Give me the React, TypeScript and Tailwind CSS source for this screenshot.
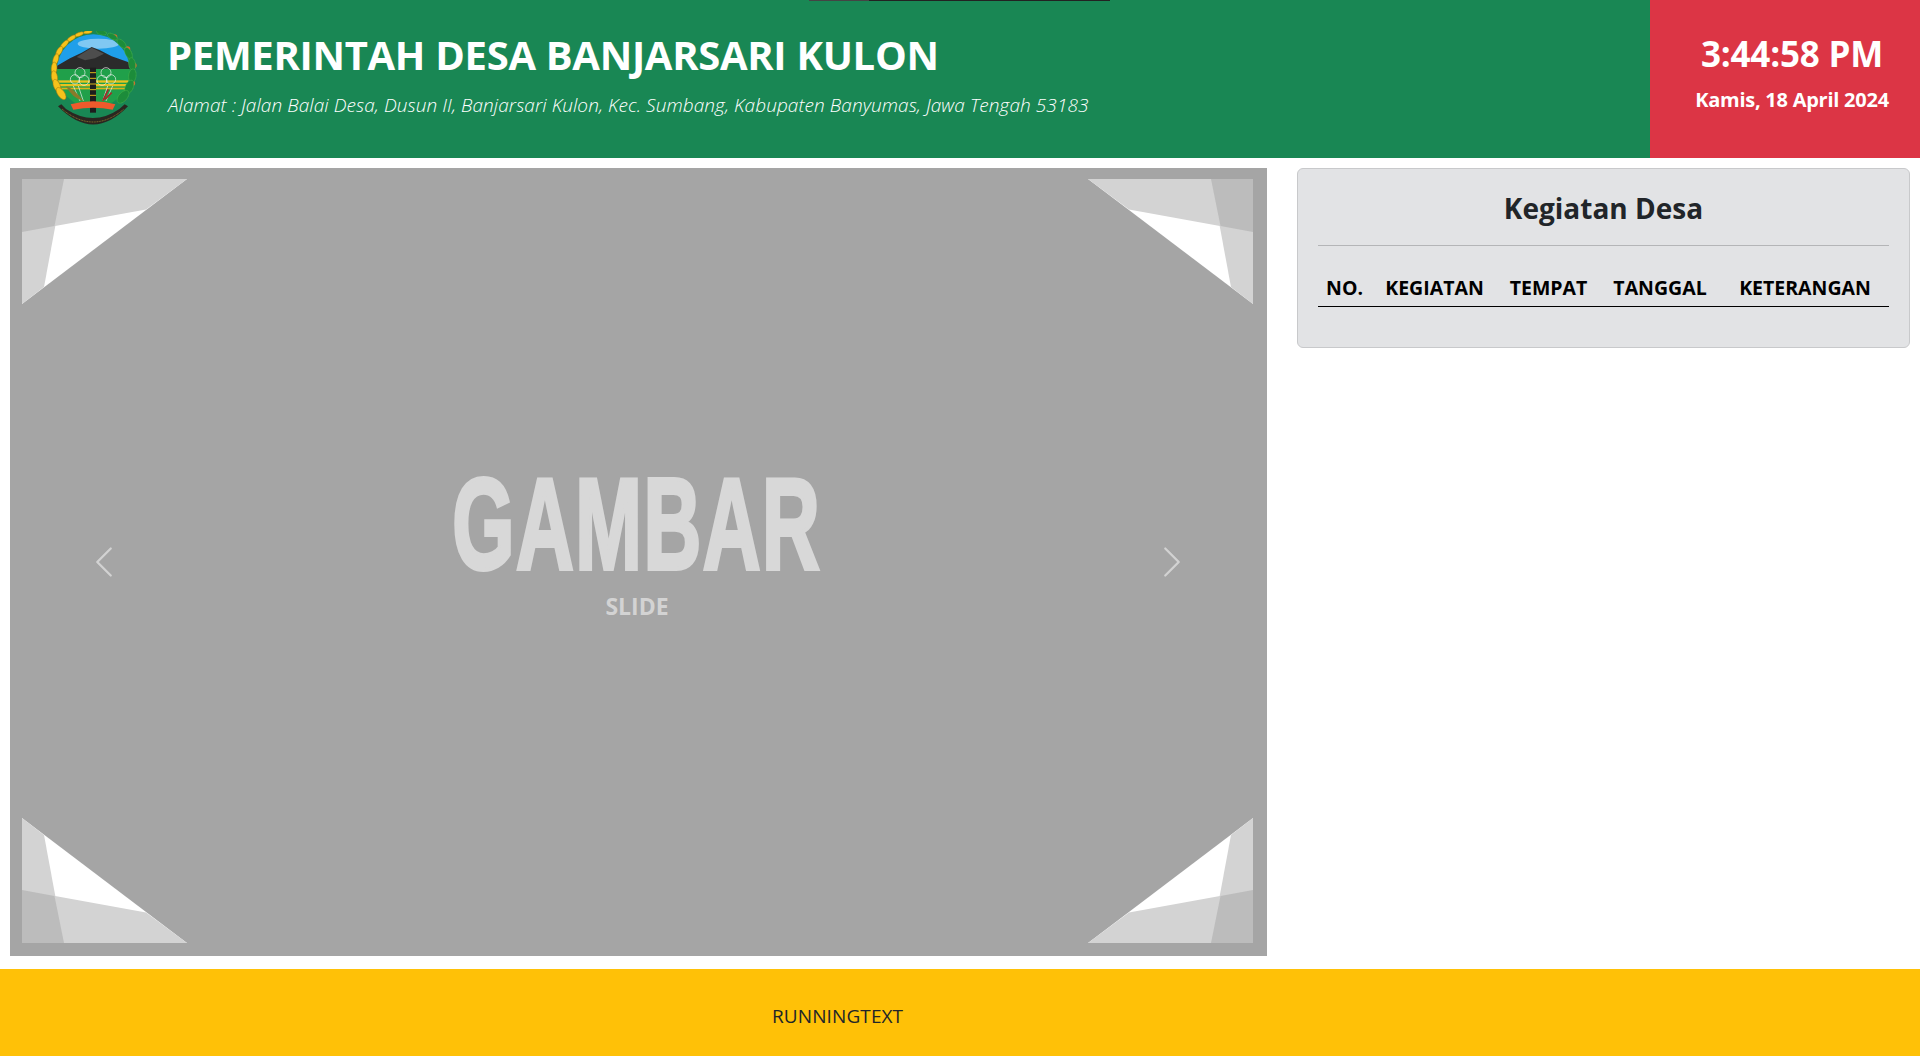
const sans = "font-['Open_Sans','Noto_Sans',sans-serif]";

const wreath = (from: number, count: number, step: number) =>
  Array.from({ length: count }, (_, i) => {
    const deg = from + i * step;
    const rad = (deg * Math.PI) / 180;
    return { x: 190 + 118 * Math.cos(rad), y: 150 + 118 * Math.sin(rad), r: deg, i };
  });

function Logo() {
  return (
    <svg viewBox="60 30 270 288" className="w-[90px] h-[96px] shrink-0">
      <defs>
        <clipPath id="badge">
          <circle cx="190" cy="150" r="110" />
        </clipPath>
      </defs>
      <g clipPath="url(#badge)">
        <rect x="60" y="30" width="270" height="110" fill="#1f9fea" />
        <ellipse cx="205" cy="68" rx="62" ry="15" fill="#cfeaf8" opacity="0.55" />
        <path d="M80 135 L120 112 L155 95 L185 78 L210 88 L245 106 L300 125 L300 146 L80 146 Z" fill="#2b2b2b" />
        <path d="M140 108 L185 80 L222 98 L195 112 L165 118 Z" fill="#4d4d4d" />
        <rect x="80" y="144" width="220" height="120" fill="#20a04a" />
        <rect x="80" y="178" width="220" height="7" fill="#e8c21e" />
        <rect x="80" y="189" width="220" height="7" fill="#e8c21e" />
        <rect x="80" y="200" width="220" height="5" fill="#d9b31a" />
      </g>
      <g fill="none" stroke="#f2f2f2" strokeWidth="2">
        <circle cx="150" cy="155" r="15" />
        <circle cx="135" cy="175" r="14" />
        <circle cx="162" cy="178" r="15" />
        <circle cx="228" cy="155" r="15" />
        <circle cx="243" cy="175" r="14" />
        <circle cx="216" cy="178" r="15" />
        <path d="M145 195 L160 240 M130 195 L150 240 M233 195 L218 240 M248 195 L228 240" />
      </g>
      <path d="M108 195 Q135 205 160 240 Q125 230 108 195 Z" fill="#8a7a2a" />
      <path d="M235 205 L218 240 M245 215 L225 235" stroke="#a52a2a" strokeWidth="5" fill="none" />
      <rect x="180" y="140" width="18" height="135" fill="#1e1e1e" />
      <path d="M180 155 H198 M180 172 H198 M180 189 H198 M180 206 H198 M180 223 H198" stroke="#d9b31a" strokeWidth="3" />
      <path d="M122 250 Q190 232 256 250 L248 266 Q190 255 130 266 Z" fill="#ee5a2c" />
      <path d="M84 256 Q190 365 294 256 L284 250 L268 264 Q190 318 108 264 L94 250 Z" fill="#2a2620" />
      <path d="M96 264 Q190 342 282 264" stroke="#b99b32" strokeWidth="2" strokeDasharray="3 2" fill="none" />
      <g fill="#f6c21c" stroke="#a87a0c" strokeWidth="1.5">
        {wreath(262, 10, -13).map(({ x, y, r, i }) => (
          <ellipse key={i} cx={x} cy={y} rx={5 + i * 0.6} ry={13 + i * 0.9} transform={`rotate(${r} ${x} ${y})`} />
        ))}
      </g>
      <g fill="#e2652a">
        {wreath(300, 5, 26).map(({ x, y, i }) => (
          <circle key={i} cx={x + 5} cy={y} r="8" />
        ))}
      </g>
      <g fill="#1c8c3a" stroke="#58c24a" strokeWidth="1.5" strokeDasharray="3 1">
        {wreath(282, 8, 17).map(({ x, y, r, i }) => (
          <ellipse key={i} cx={x} cy={y} rx={7 + i * 0.8} ry={15 + i * 1.1} transform={`rotate(${r} ${x} ${y})`} />
        ))}
      </g>
    </svg>
  );
}

function Corner({ className }: { className: string }) {
  return (
    <svg viewBox="0 0 165 125" className={`absolute w-[165px] h-[125px] ${className}`}>
      <polygon points="0,0 165,0 0,125" fill="#ffffff" />
      <polygon points="0,0 165,0 124,30.5 0,53" fill="#d3d3d3" />
      <polygon points="0,0 42,0 22,108 0,125" fill="#d3d3d3" />
      <polygon points="0,0 42,0 32.5,47 0,53" fill="#bcbcbc" />
    </svg>
  );
}

function Chevron({ flip }: { flip?: boolean }) {
  return (
    <svg viewBox="0 0 16 16" fill="#ffffff" className={`w-9 h-9 opacity-50 ${flip ? "-scale-x-100" : ""}`}>
      <path d="M11.354 1.646a.5.5 0 0 1 0 .708L5.707 8l5.647 5.646a.5.5 0 0 1-.708.708l-6-6a.5.5 0 0 1 0-.708l6-6a.5.5 0 0 1 .708 0z" />
    </svg>
  );
}

export default function App() {
  return (
    <div className={`relative h-[1056px] w-full overflow-hidden flex flex-col bg-white ${sans}`}>
      <div className="absolute top-0 left-[809px] w-[301px] h-px flex">
        <div className="w-[60px] bg-[#444444]" />
        <div className="flex-1 bg-[#222222]" />
      </div>

      <header className="h-[158px] flex shrink-0">
        <div className="flex-1 bg-[#198754] flex items-center pl-[50px]">
          <Logo />
          <div className="ml-[28px] mt-[-11px] text-white">
            <h1 className="ml-[-1px] text-[40px] leading-[48px] font-bold tracking-[-0.3px]">PEMERINTAH DESA BANJARSARI KULON</h1>
            <p className="mt-[14px] text-[19px] leading-[24px] font-light italic tracking-[0.08px]">
              Alamat : Jalan Balai Desa, Dusun II, Banjarsari Kulon, Kec. Sumbang, Kabupaten Banyumas, Jawa Tengah 53183
            </p>
          </div>
        </div>
        <div className="w-[270px] bg-[#dc3545] text-white text-center pl-[14px]">
          <div className="mt-[32px] text-[35px] leading-[44px] font-bold tracking-[-0.2px]">3:44:58 PM</div>
          <div className="mt-[12px] text-[20px] leading-[24px] font-bold tracking-[-0.25px]">Kamis, 18 April 2024</div>
        </div>
      </header>

      <main className="flex-1 flex pt-[10px] pl-[10px] pr-[10px] gap-[30px]">
        <section className="relative w-[1257px] h-[788px] bg-[#a5a5a5] flex flex-col items-center justify-center">
          <Corner className="top-[11px] left-[12px]" />
          <Corner className="top-[11px] right-[14px] -scale-x-100" />
          <Corner className="bottom-[13px] left-[12px] -scale-y-100" />
          <Corner className="bottom-[13px] right-[14px] -scale-100" />
          <div className="absolute left-[76px] top-[376px]"><Chevron /></div>
          <div className="absolute right-[77px] top-[376px]"><Chevron flip /></div>
          <div className="mt-[-36px] ml-[-4px] scale-x-[0.62] text-[129px] leading-[112px] tracking-[2.5px] font-['Liberation_Sans',sans-serif] font-bold text-[#d8d8d8] [-webkit-text-stroke:4px_#d8d8d8]">GAMBAR</div>
          <div className="mt-[12px] ml-[-3px] text-[23px] leading-[28px] font-bold text-[#d3d3d3]">SLIDE</div>
        </section>

        <aside className="w-[613px] h-[180px] rounded-md border border-[#c8c9cb] bg-[#e2e3e5] px-[20px] pt-[19px]">
          <h2 className="text-center text-[28px] leading-[40px] font-bold text-[#212529]">Kegiatan Desa</h2>
          <hr className="mt-[17px] border-[#b4b5b7]" />
          <table className="mt-[29px] w-full table-fixed text-[19.5px] leading-[26px] font-bold text-black">
            <thead>
              <tr className="border-b border-black">
                <th className="w-[53px] pb-[5px] text-center">NO.</th>
                <th className="w-[127px] pb-[5px] text-center">KEGIATAN</th>
                <th className="w-[101px] pb-[5px] text-center">TEMPAT</th>
                <th className="w-[122px] pb-[5px] text-center">TANGGAL</th>
                <th className="pb-[5px] text-center">KETERANGAN</th>
              </tr>
            </thead>
          </table>
        </aside>
      </main>

      <footer className="h-[87px] shrink-0 bg-[#ffc107] flex items-center pl-[772px] pt-[7px] text-[19px] tracking-[0.1px] text-[#212529]">
        RUNNINGTEXT
      </footer>
    </div>
  );
}
